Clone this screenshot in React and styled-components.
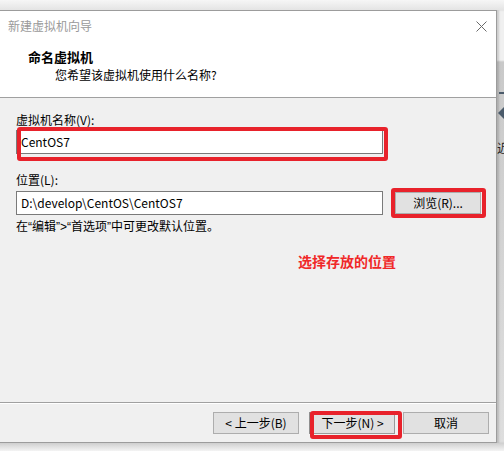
import styled, { createGlobalStyle } from 'styled-components';

const Global = createGlobalStyle`
  html, body { margin: 0; padding: 0; }
  body {
    background: #f0f0f0;
    font-family: "Noto Sans CJK SC", "Liberation Sans", sans-serif;
    font-size: 12px;
    color: #000;
  }
`;

const Page = styled.div`
  width: 504px;
  height: 451px;
  display: flex;
  flex-direction: column;
  overflow: hidden;
  background: #f0f0f0;
`;

const TopShade = styled.div`
  height: 10px;
  background: linear-gradient(#f6f6f6, #e4e4e4);
`;

const Row = styled.div`
  display: flex;
`;

const Dialog = styled.div`
  width: 496px;
  height: 431px;
  display: flex;
  flex-direction: column;
  border-top: 1px solid #9c9c9c;
  border-right: 1px solid #9c9c9c;
  border-bottom: 1px solid #9c9c9c;
  background: #f0f0f0;
`;

const Side = styled.div`
  flex: 1;
  position: relative;
  overflow: hidden;
  background: linear-gradient(#f0f0f0 0, #f0f0f0 50px, #c9c9c9 52px, #dedede 100%);
  box-shadow: inset 2px 0 2px rgba(0, 0, 0, 0.15);
`;

const SideDash = styled.div`
  position: absolute;
  left: 2px;
  top: 82px;
  width: 6px;
  height: 2px;
  background: #4a5a6a;
`;

const SideArrow = styled.div`
  position: absolute;
  left: 1px;
  top: 97px;
  width: 0;
  height: 0;
  border-top: 6px solid transparent;
  border-bottom: 6px solid transparent;
  border-right: 6px solid #4a5a6a;
`;

const SideChar = styled.span`
  position: absolute;
  left: 0;
  top: 130px;
  font-size: 12px;
  line-height: 16px;
  color: #222;
`;

const BottomShade = styled.div`
  flex: 1;
  background: linear-gradient(#cfcfcf, #f4f4f4);
`;

const TitleBar = styled.div`
  height: 30px;
  background: #fff;
  display: flex;
  align-items: center;
  justify-content: space-between;
  padding: 0 9px 0 8px;
`;

const TitleText = styled.span`
  color: #9a9a9a;
  font-size: 12px;
  line-height: 16px;
`;

const Header = styled.div`
  background: #fff;
  border-bottom: 1px solid #a0a0a0;
  padding: 8px 0 0 28px;
  box-sizing: border-box;
  height: 57px;
`;

const Heading = styled.div`
  font-weight: bold;
  font-size: 13px;
  line-height: 16px;
`;

const SubHeading = styled.div`
  margin: 2px 0 0 27px;
  line-height: 16px;
`;

const Body = styled.div`
  height: 304px;
  padding: 0 16px;
  display: flex;
  flex-direction: column;
  align-items: flex-start;
`;

const Label = styled.div`
  line-height: 16px;
  margin-top: ${p => p.$top}px;
`;

const Marked = styled.div`
  position: relative;
  display: flex;
  margin-top: ${p => p.$top || 0}px;
  margin-left: ${p => p.$left || 0}px;
  &::after {
    content: '';
    position: absolute;
    top: ${p => p.$t}px;
    left: ${p => p.$l}px;
    right: ${p => p.$r}px;
    bottom: ${p => p.$b}px;
    border: 4px solid #e8222b;
    border-radius: 3px;
    pointer-events: none;
  }
`;

const Field = styled.div`
  width: 367px;
  height: 24px;
  box-sizing: border-box;
  background: #fff;
  border: 1px solid #7a7a7a;
  padding-left: 4px;
  display: flex;
  align-items: center;
  line-height: 16px;
`;

const FieldRow = styled.div`
  display: flex;
  align-items: flex-start;
  margin-top: 3px;
`;

const Button = styled.button`
  width: 86px;
  height: 22px;
  box-sizing: border-box;
  background: #e1e1e1;
  border: 1px solid #adadad;
  font-family: inherit;
  font-size: 12px;
  line-height: 16px;
  color: #000;
  padding: 0;
  margin: 0;
  ${p => p.$default && 'border-color: #9a9a9a; border-left: 2px solid #8f8f8f;'}
`;

const Hint = styled.div`
  margin-top: 4px;
  line-height: 16px;
  font-family: "Liberation Sans", "Noto Sans CJK SC", sans-serif;
`;

const Note = styled.div`
  margin: 16px 0 0 282px;
  color: #f02828;
  font-weight: bold;
  font-size: 14px;
  line-height: 20px;
`;

const Footer = styled.div`
  border-top: 1px solid #a0a0a0;
  box-shadow: inset 0 1px 0 #fff;
  display: flex;
  justify-content: flex-end;
  align-items: flex-start;
  padding: 9px 7px 0 0;
  box-sizing: content-box;
  height: 30px;
`;

const Gap = styled.div`
  width: ${p => p.$w}px;
`;

const CloseIcon = () => (
  <svg width="11" height="11" viewBox="0 0 11 11">
    <path d="M0.5 0.5 L10.5 10.5 M10.5 0.5 L0.5 10.5" stroke="#6a6a6a" strokeWidth="1" />
  </svg>
);

export default function App() {
  return (
    <Page>
      <Global />
      <TopShade />
      <Row>
        <Dialog>
          <TitleBar>
            <TitleText>新建虚拟机向导</TitleText>
            <CloseIcon />
          </TitleBar>
          <Header>
            <Heading>命名虚拟机</Heading>
            <SubHeading>您希望该虚拟机使用什么名称?</SubHeading>
          </Header>
          <Body>
            <Label $top={14}>虚拟机名称(V):</Label>
            <Marked $top={2} $t={-3} $l={1} $r={-5} $b={-7}>
              <Field>CentOS7</Field>
            </Marked>
            <Label $top={18}>位置(L):</Label>
            <FieldRow>
              <Field>D:\develop\CentOS\CentOS7</Field>
              <Marked $top={1} $left={12} $t={-4} $l={-4} $r={-5} $b={-4}>
                <Button>浏览(R)...</Button>
              </Marked>
            </FieldRow>
            <Hint>在“编辑”&gt;“首选项”中可更改默认位置。</Hint>
            <Note>选择存放的位置</Note>
          </Body>
          <Footer>
            <Button>&lt; 上一步(B)</Button>
            <Gap $w={10} />
            <Marked $t={-1} $l={1} $r={-7} $b={-5}>
              <Button $default>下一步(N) &gt;</Button>
            </Marked>
            <Gap $w={8} />
            <Button>取消</Button>
          </Footer>
        </Dialog>
        <Side>
          <SideDash />
          <SideArrow />
          <SideChar>近</SideChar>
        </Side>
      </Row>
      <BottomShade />
    </Page>
  );
}
